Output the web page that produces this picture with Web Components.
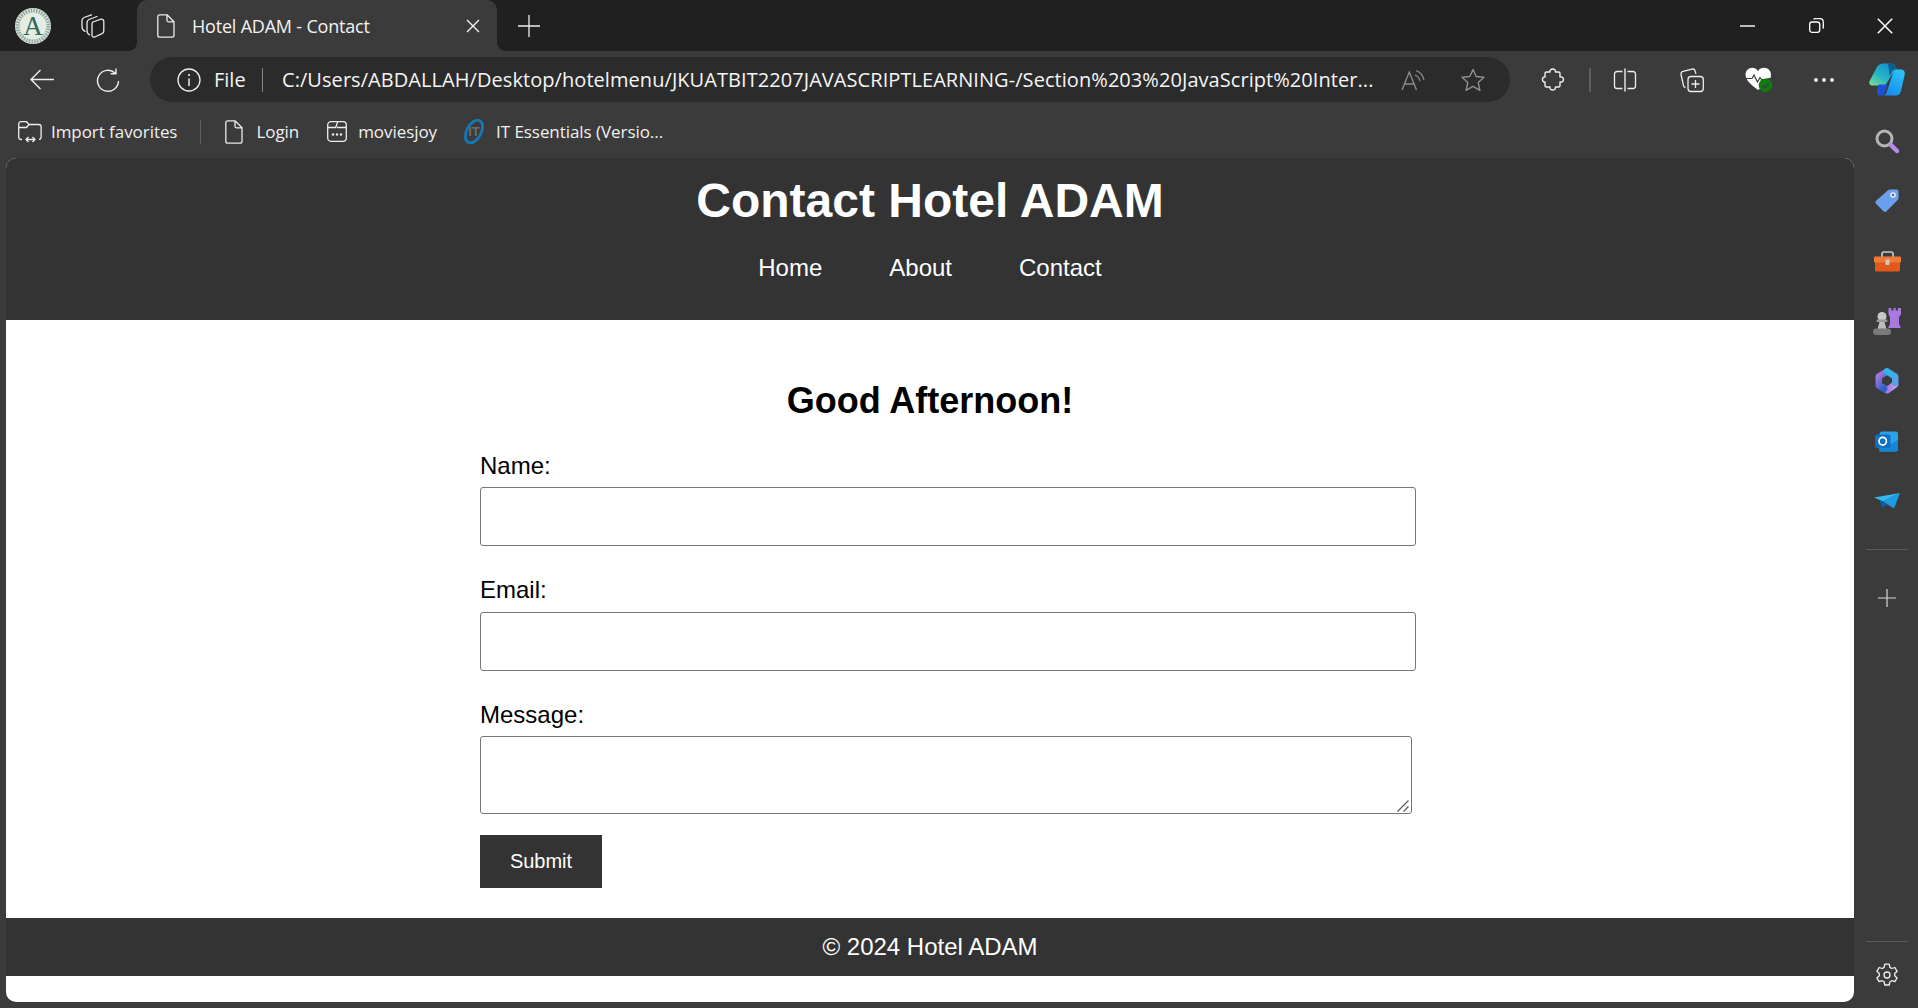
<!DOCTYPE html>
<html lang="en">
<head>
<meta charset="utf-8">
<title>Hotel ADAM - Contact</title>
<style>
    html, body { margin: 0; height: 100%; overflow: hidden; background: #3b3b3b; }
    body {
        display: grid;
        grid-template-rows: 51px 57px 1fr;
        grid-template-columns: 1fr;
        height: 1008px;
    }
</style>
</head>
<body>
<browser-tabstrip></browser-tabstrip>
<browser-toolbar></browser-toolbar>
<browser-body>
    <hotel-page>
        <hotel-header slot="header" heading="Contact Hotel ADAM"></hotel-header>
        <contact-form greeting="Good Afternoon!"></contact-form>
        <hotel-footer slot="footer">© 2024 Hotel ADAM</hotel-footer>
    </hotel-page>
</browser-body>

<script>
const ICONS = {
    workspaces: [24, 24, `<g fill="none" stroke="#e8e8e8" stroke-width="1.300" stroke-linecap="round" stroke-linejoin="round"><path d="M11.800 8L20 5.200Q22.800 4.800 22.800 7.800V17Q22.800 19 21 19.700L13.800 23Q11 23.600 11 21V10Q11 8.500 11.800 8z"/><path d="M8.500 20.800Q6 19.500 6 16.500V8.500Q6 6.500 8 5.500L16 2.500"/><path d="M4 17.300Q1 15.800 1 12.800V6.500Q1 4.500 3 3.500L10.500.8"/></g>`],
    file: [18, 24, `<path d="M2.800.8h7.200l7 7v13.400c0 1.100-.9 2-2 2H2.800c-1.100 0-2-.9-2-2V2.800c0-1.100.9-2 2-2zM10 .8v5.500c0 .9.600 1.500 1.500 1.500H17" fill="none" stroke="#eaeaea" stroke-width="1.300" stroke-linejoin="round"/>`],
    close: [14, 14, `<path d="M1 1l12 12M13 1L1 13" stroke="#f2f2f2" stroke-width="1.400" fill="none"/>`],
    plus: [22, 22, `<path d="M11 0v22M0 11h22" stroke="#ededed" stroke-width="1.300" fill="none"/>`],
    min: [15, 2, `<rect width="15" height="1.400" y=".3" fill="#fff"/>`],
    restore: [15, 15, `<g fill="none" stroke="#fff" stroke-width="1.300"><rect x=".7" y="4" width="10" height="10.300" rx="2.300"/><path d="M4.500 1.200c.4-.3.900-.5 1.500-.5h5c2 0 3.300 1.300 3.300 3.300v5c0 .6-.2 1.100-.5 1.500"/></g>`],
    winclose: [16, 16, `<path d="M.8.800l14.400 14.400M15.200.800L.8 15.200" stroke="#fff" stroke-width="1.500" fill="none"/>`],
    back: [24, 21, `<path d="M24 10.500H1.500M10.500 1L1 10.500 10.500 20" fill="none" stroke="#eee" stroke-width="1.400"/>`],
    refresh: [24, 24, `<path d="M19.300 5.200A10.500 10.500 0 1 0 22.500 13M20 .5v5.300h-5.300" fill="none" stroke="#eee" stroke-width="1.400"/>`],
    info: [24, 24, `<circle cx="12" cy="12" r="11" fill="none" stroke="#eee" stroke-width="1.300"/><path d="M12 10.500v7.500" stroke="#eee" stroke-width="1.500"/><circle cx="12" cy="7" r="1.100" fill="#eee"/>`],
    read: [24, 22, `<path d="M1 21L8.300 3l7.200 18M3.500 15h10" fill="none" stroke="#8a8a8a" stroke-width="1.400"/><path d="M15 1.500c4 1.500 7 5 8 9.500M14 6c2.500 1 4.300 3.200 5 6" fill="none" stroke="#8a8a8a" stroke-width="1.300"/>`],
    star: [24, 24, `<path d="M12 1.500l3.200 7 7.800.8-5.800 5.200 1.700 7.800-6.900-4-6.900 4 1.700-7.800L1 9.300l7.800-.8z" fill="none" stroke="#8f8f8f" stroke-width="1.400" stroke-linejoin="round"/>`],
    puzzle: [22, 23, `<path d="M8 4C7.600 2 9 1 10.700 1s3.100 1 2.700 3h3.100Q18 4 18 5.500V9c2-.4 3.500.7 3.500 2.500S20 14.400 18 14v3.500Q18 19 16.500 19h-3.100c.4 2-1 3-2.700 3S7.600 21 8 19H4.500Q3 19 3 17.500V14c-1.500.4-2.500-1-2.500-2.500S1.500 8.600 3 9V5.500Q3 4 4.500 4z" fill="none" stroke="#f0f0f0" stroke-width="1.400" stroke-linejoin="round"/>`],
    split: [22, 24, `<path d="M8.500 3.500H3a2.500 2.500 0 0 0-2.500 2.500v12A2.500 2.500 0 0 0 3 20.500h5.500M13.500 3.500H19A2.500 2.500 0 0 1 21.500 6v12a2.500 2.500 0 0 1-2.500 2.500h-5.500" fill="none" stroke="#eee" stroke-width="1.300"/><path d="M11 .5v23" stroke="#eee" stroke-width="1.400"/>`],
    collections: [24, 24, `<g fill="none" stroke="#eee" stroke-width="1.300"><rect x="8" y="8.500" width="15.300" height="15" rx="3"/><path d="M15.500 12v8M11.500 16h8"/><path d="M5.500 19.500c-1-.2-1.700-.9-2-1.800L1 6.500c-.3-1.400.5-2.800 2-3.100l9-2.300c1.300-.3 2.700.5 3.100 1.800l.8 3"/></g>`],
    health: [28, 25, `<path d="M13 4.200C11.500 1.800 9.500.8 7.300.8 3.500.8.500 3.800.500 7.600c0 5.500 5.500 10.500 12.500 15.400 1-.7 2-1.400 3-2.200A8.500 8.500 0 0 1 25.500 11c.3-1.100.5-2.300.5-3.400 0-3.800-3-6.800-6.800-6.800-2.700 0-4.900 1-6.200 3.400z" fill="#fff"/><path d="M.5 11.500h6.500l2-3.500 3.500 7 2.500-4.500 1.500 2h5" fill="none" stroke="#3b3b3b" stroke-width="1.200"/><circle cx="20.500" cy="18.300" r="6.800" fill="#107c10"/><path d="M17.500 18.500l2.200 2.200 4-4.200" fill="none" stroke="#3b3b3b" stroke-width="1.200"/>`],
    dots: [20, 4, `<circle cx="2" cy="2" r="1.900" fill="#f2f2f2"/><circle cx="10" cy="2" r="1.900" fill="#f2f2f2"/><circle cx="18" cy="2" r="1.900" fill="#f2f2f2"/>`],
    copilot: [36, 33, `<defs><linearGradient id="cpa" x1="0" y1="1" x2=".8" y2="0"><stop offset="0" stop-color="#7fe08c"/><stop offset=".45" stop-color="#27b7c4"/><stop offset="1" stop-color="#118ad0"/></linearGradient><linearGradient id="cpb" x1=".2" y1="1" x2=".8" y2="0"><stop offset="0" stop-color="#1689ee"/><stop offset="1" stop-color="#2cc3f5"/></linearGradient></defs><path d="M14 .5h8c3 0 4.500 2 6 6l-4 4L16 22.500H3.500c-2.500 0-3.800-2-3-4.300L8 4c.9-2.300 3.500-3.500 6-3.500z" fill="url(#cpa)"/><path d="M19 .5h3c3 0 4.500 2 6 6h-2c-2.500 0-3.500 2-4 4l-1 3z" fill="#0e5f8f"/><path d="M10 21.500h8.500l-3 9c-.3 1-1.500 2-3 2H9c-1.500-1.500-1.500-5.500 1-11z" fill="#1e4fd6"/><path d="M28 6.500h3.500c3 0 4.800 2 4.200 5l-3.700 16.500c-.6 3-2.600 4.500-5.300 4.500H13.500c2 0 3.400-1 4-3L24 10.500c.6-2.400 2-4 4-4z" fill="url(#cpb)"/>`],
    folder: [24, 22, `<g fill="none" stroke="#eee" stroke-width="1.300" stroke-linejoin="round"><path d="M4 18.500H3c-1.300 0-2.300-1-2.300-2.300V3c0-1.300 1-2.300 2.300-2.300h5.500L11 3.500h9.800c1.300 0 2.300 1 2.300 2.300v10.400c0 1.300-.8 2-2 2.300"/><path d="M.7 6.500H8.500L11 3.500"/><path d="M8 18.500h9M10.500 16l-2.500 2.500 2.500 2.500M14.500 16l2.500 2.500-2.500 2.500"/></g>`],
    site: [20, 21, `<g fill="none" stroke="#eee" stroke-width="1.300"><rect x=".7" y=".7" width="18.600" height="19.600" rx="3.300"/><path d="M.7 6.500h8l2-5.800M10 6.500h9.300"/></g><circle cx="6" cy="13.500" r="1.200" fill="#eee"/><circle cx="10" cy="13.500" r="1.200" fill="#eee"/><circle cx="14" cy="13.500" r="1.200" fill="#eee"/>`],
    itess: [22, 23, `<ellipse cx="11" cy="11.500" rx="7.200" ry="12.200" transform="rotate(28 11 11.500)" fill="none" stroke="#1377b8" stroke-width="2.800"/><text x="11" y="16" text-anchor="middle" font-family="Liberation Sans, sans-serif" font-size="13" font-weight="700" fill="#6b6b6b">IT</text>`],
    search: [24, 24, `<circle cx="9.500" cy="9.500" r="7.500" fill="none" stroke="#b5b5b5" stroke-width="3"/><path d="M16 16l6 6" stroke="#b98be6" stroke-width="4.500" stroke-linecap="round"/>`],
    tag: [24, 24, `<path d="M15 .5h6.500c1.100 0 2 .9 2 2V9c0 .8-.3 1.400-.8 2L11.500 22.300c-.9.900-2.200.9-3.100 0L1 14.800c-.8-.8-.8-2.100 0-3L13 1.300c.5-.5 1.200-.8 2-.8z" fill="#6aa0ee"/><circle cx="18" cy="6" r="2.800" fill="#e8eefc"/><circle cx="18" cy="6" r="1.200" fill="#3c5fa8"/>`],
    toolbox: [27, 21, `<path d="M8 7V3c0-1.200.8-2 2-2h7c1.200 0 2 .8 2 2v4" fill="none" stroke="#c9c9c9" stroke-width="1.700"/><rect x="1" y="6" width="25" height="14.500" rx="1.500" fill="#e2581d"/><rect y="5.500" width="27" height="6" rx="1" fill="#f07a35"/><rect x="11.500" y="8.500" width="4" height="5.500" rx=".8" fill="#c9c9c9"/>`],
    chess: [28, 27, `<path d="M15.500 0h2.800v2.500h2.200V0h2.200v2.500h2.200V0H28v6.500l-2 2.500v7l2 4H15l2-4V9l-1.500-2.500z" fill="#a979e0"/><circle cx="9" cy="8.500" r="4.500" fill="#c8c8c8"/><rect x="3.500" y="11.500" width="11" height="2.500" rx="1.200" fill="#9c9c9c"/><path d="M6.500 14h5l2 7h-9z" fill="#bdbdbd"/><rect y="20.500" width="18" height="6.500" rx="3" fill="#7a7a7a"/>`],
    m365: [24, 26, `<defs><linearGradient id="m3a" x1="0" y1="0" x2=".6" y2="1"><stop offset="0" stop-color="#b07ae6"/><stop offset="1" stop-color="#2d5fc9"/></linearGradient><linearGradient id="m3b" x1="0" y1="0" x2="1" y2="1"><stop offset="0" stop-color="#29b6e8"/><stop offset="1" stop-color="#5aa0ee"/></linearGradient><linearGradient id="m3c" x1="0" y1="0" x2="1" y2="0"><stop offset="0" stop-color="#8a5fd8"/><stop offset="1" stop-color="#c49af0"/></linearGradient></defs><g fill="none" stroke-width="6.500" stroke-linejoin="round" stroke-linecap="round"><path d="M20 16.500L12 22.300 7 19" stroke="url(#m3c)"/><path d="M12 3.500L3.800 8.500V17.500L9 20.800" stroke="url(#m3a)"/><path d="M12 3.500L20.200 8.500V15" stroke="url(#m3b)"/></g>`],
    outlook: [24, 21, `<path d="M7 .5h14c1 0 2 1 2 2v15.500c0 1.500-1 2.500-2.500 2.500H6c-.9 0-1.500-.5-1.500-1.500V3C4.500 1.500 5.500.5 7 .5z" fill="#2aa4e8"/><path d="M23 9l-9 5-9.500-5v11.500h16c1.500 0 2.500-1 2.500-2.500z" fill="#1486d6"/><rect y="3.500" width="15.500" height="13.500" rx="2" fill="#0c6fc4"/><ellipse cx="7.700" cy="10.200" rx="3.700" ry="3.900" fill="none" stroke="#fff" stroke-width="1.700"/>`],
    send: [26, 16, `<path d="M0 4.500L26 0 9 8.500z" fill="#35b8f0"/><path d="M26 0L9 8.500 20 15.500z" fill="#1e9be6"/><path d="M5.500 7l3.500 1.500 4 3-4.500 3.500z" fill="#0d5ea8"/>`],
    railplus: [18, 18, `<path d="M9 0v18M0 9h18" stroke="#d8d8d8" stroke-width="1.200" fill="none"/>`],
    gear: [24, 24, `<path d="M9.800 1.200h4.400l.7 3.200 1.900 1.100 3.100-1 2.200 3.800-2.400 2.200v2.200l2.400 2.200-2.200 3.800-3.100-1-1.900 1.100-.7 3.200H9.800l-.7-3.200-1.900-1.100-3.100 1-2.200-3.800 2.400-2.200v-2.200L1.900 8.300l2.200-3.800 3.100 1 1.900-1.100z" fill="none" stroke="#efefef" stroke-width="1.300" stroke-linejoin="round"/><circle cx="12" cy="12" r="3" fill="none" stroke="#efefef" stroke-width="1.300"/>`],
};

class UiIcon extends HTMLElement {
    connectedCallback() {
        const [w, h, body] = ICONS[this.getAttribute("name")];
        this.attachShadow({ mode: "open" });
        this.shadowRoot.innerHTML = `
            <style>
                :host { display: inline-flex; flex: none; align-items: center; justify-content: center; }
                svg { display: block; overflow: visible; }
            </style>
            <svg width="${w}" height="${h}" viewBox="0 0 ${w} ${h}">${body}</svg>
        `;
    }
}

// fixed width cell with a centred icon
class IconSlot extends HTMLElement {
    connectedCallback() {
        const w = this.getAttribute("w") || 60;
        this.attachShadow({ mode: "open" });
        this.shadowRoot.innerHTML = `
            <style>
                :host { display: flex; flex: none; width: ${w}px; align-items: center; justify-content: center; }
            </style>
            <ui-icon name="${this.getAttribute("name")}"></ui-icon>
        `;
    }
}

class BrowserTabstrip extends HTMLElement {
    constructor() {
        super();
        this.attachShadow({ mode: "open" });
        this.shadowRoot.innerHTML = `
            <style>
                :host {
                    display: flex;
                    align-items: center;
                    height: 51px;
                    background: #202020;
                    color: #f2f2f2;
                    font: 18px "Open Sans", sans-serif;
                }
                .avatar { margin-left: 15px; width: 36px; height: 36px; flex: none; display: block; }
                .spaces { margin-left: 30px; }
                .tab {
                    position: relative;
                    box-sizing: border-box;
                    margin-left: 32px;
                    width: 360px;
                    height: 51px;
                    display: flex;
                    align-items: center;
                    background: #3b3b3b;
                    border-radius: 10px 10px 0 0;
                    padding-left: 20px;
                }
                .tab::before, .tab::after {
                    content: "";
                    position: absolute;
                    bottom: 0;
                    width: 8px;
                    height: 8px;
                }
                .tab::before { left: -8px; background: radial-gradient(circle at 0 0, #202020 7.5px, #3b3b3b 8px); }
                .tab::after { right: -8px; background: radial-gradient(circle at 100% 0, #202020 7.5px, #3b3b3b 8px); }
                .title { margin-left: 17px; flex: 1; letter-spacing: -0.2px; white-space: nowrap; }
                .x { margin-right: 17px; }
                .new { margin-left: 21px; }
                .win { margin-left: auto; display: flex; align-items: center; }
            </style>
            <svg class="avatar" viewBox="0 0 36 36">
                <circle cx="18" cy="18" r="18" fill="#dfe6dc"/>
                <circle cx="18" cy="18" r="15.500" fill="none" stroke="#8fa89f" stroke-width="4" stroke-dasharray="1.500 1.200"/>
                <circle cx="18" cy="18" r="12.800" fill="#e6ebe3"/>
                <text x="18" y="27" text-anchor="middle" font-family="Liberation Serif, serif" font-size="27" fill="#2f6b5c">A</text>
            </svg>
            <ui-icon class="spaces" name="workspaces"></ui-icon>
            <div class="tab">
                <ui-icon name="file"></ui-icon>
                <span class="title">Hotel ADAM - Contact</span>
                <ui-icon class="x" name="close"></ui-icon>
            </div>
            <ui-icon class="new" name="plus"></ui-icon>
            <div class="win">
                <icon-slot w="67" name="min"></icon-slot>
                <icon-slot w="71" name="restore"></icon-slot>
                <icon-slot w="66" name="winclose"></icon-slot>
            </div>
        `;
    }
}

class BrowserToolbar extends HTMLElement {
    constructor() {
        super();
        this.attachShadow({ mode: "open" });
        this.shadowRoot.innerHTML = `
            <style>
                :host {
                    display: flex;
                    align-items: flex-start;
                    height: 57px;
                    background: #3b3b3b;
                    color: #f5f5f5;
                    font: 20px "Open Sans", sans-serif;
                }
                .row { display: flex; height: 45px; margin-top: 6px; width: 100%; }
                .nav { margin-left: 9px; display: flex; }
                .address {
                    margin-left: 9px;
                    width: 1360px;
                    height: 45px;
                    flex: none;
                    background: #2b2b2b;
                    border-radius: 22.500px;
                    display: flex;
                    align-items: center;
                    box-sizing: border-box;
                    padding-left: 27px;
                    padding-right: 7px;
                }
                .scheme { margin-left: 13px; }
                .bar { width: 1px; height: 24px; background: #8a8a8a; margin: 0 19px 0 auto; flex: none; }
                .lead { display: flex; align-items: center; width: 105px; flex: none; }
                .url { flex: 1; white-space: nowrap; overflow: hidden; letter-spacing: 0.06px; }
                .rule { width: 2px; height: 24px; align-self: center; background: #5f5f5f; margin-left: 6px; flex: none; }
                .tools { margin-left: 13px; display: flex; }
                .tools icon-slot:nth-of-type(2) { margin-left: 1px; }
            </style>
            <div class="row">
                <div class="nav">
                    <icon-slot w="66" name="back"></icon-slot>
                    <icon-slot w="66" name="refresh"></icon-slot>
                </div>
                <div class="address">
                    <div class="lead">
                        <ui-icon name="info"></ui-icon>
                        <span class="scheme">File</span>
                        <span class="bar"></span>
                    </div>
                    <span class="url">C:/Users/ABDALLAH/Desktop/hotelmenu/JKUATBIT2207JAVASCRIPTLEARNING-/Section%203%20JavaScript%20Inter...</span>
                    <icon-slot w="60" name="read"></icon-slot>
                    <icon-slot w="60" name="star"></icon-slot>
                </div>
                <div class="tools">
                    <icon-slot w="60" name="puzzle"></icon-slot>
                    <span class="rule"></span>
                    <icon-slot w="66" name="split"></icon-slot>
                    <icon-slot w="68" name="collections"></icon-slot>
                    <icon-slot w="66" name="health"></icon-slot>
                    <icon-slot w="64" name="dots"></icon-slot>
                    <icon-slot w="62" name="copilot"></icon-slot>
                </div>
            </div>
        `;
    }
}

class BookmarksBar extends HTMLElement {
    constructor() {
        super();
        this.attachShadow({ mode: "open" });
        this.shadowRoot.innerHTML = `
            <style>
                :host {
                    display: flex;
                    align-items: center;
                    box-sizing: border-box;
                    height: 50px;
                    padding-bottom: 3px;
                    color: #f0f0f0;
                    font: 17px "Open Sans", sans-serif;
                    letter-spacing: -0.06px;
                    white-space: nowrap;
                }
                .mark { display: flex; align-items: center; gap: 11px; }
                .sep { width: 1px; height: 24px; background: #5f5f5f; margin: 0 24px 0 23px; flex: none; }
            </style>
            <div class="mark" style="margin-left:18px;gap:9px"><ui-icon name="folder"></ui-icon><span>Import favorites</span></div>
            <span class="sep"></span>
            <div class="mark" style="gap:13px"><ui-icon name="file"></ui-icon><span>Login</span></div>
            <div class="mark" style="margin-left:28px"><ui-icon name="site"></ui-icon><span>moviesjoy</span></div>
            <div class="mark" style="margin-left:26px"><ui-icon name="itess"></ui-icon><span>IT Essentials (Versio...</span></div>
        `;
    }
}

class SideRail extends HTMLElement {
    constructor() {
        super();
        this.attachShadow({ mode: "open" });
        this.shadowRoot.innerHTML = `
            <style>
                :host {
                    display: flex;
                    flex-direction: column;
                    align-items: center;
                    width: 64px;
                    flex: none;
                    box-sizing: border-box;
                    padding: 3px 0 0 2px;
                    height: 900px;
                }
                .item { height: 60px; display: flex; align-items: center; justify-content: center; flex: none; }
                .line { width: 42px; height: 1px; background: #5a5a5a; flex: none; }
                .add { margin-top: 18px; }
                .foot { margin-top: auto; margin-bottom: 3px; }
                .foot .line { margin-bottom: 3px; }
            </style>
            <div class="item"><ui-icon name="search"></ui-icon></div>
            <div class="item"><ui-icon name="tag"></ui-icon></div>
            <div class="item"><ui-icon name="toolbox"></ui-icon></div>
            <div class="item"><ui-icon name="chess"></ui-icon></div>
            <div class="item"><ui-icon name="m365"></ui-icon></div>
            <div class="item"><ui-icon name="outlook"></ui-icon></div>
            <div class="item"><ui-icon name="send"></ui-icon></div>
            <div class="line" style="margin-top:18px"></div>
            <div class="item add"><ui-icon name="railplus"></ui-icon></div>
            <div class="foot">
                <div class="line"></div>
                <div class="item"><ui-icon name="gear"></ui-icon></div>
            </div>
        `;
    }
}

class BrowserBody extends HTMLElement {
    constructor() {
        super();
        this.attachShadow({ mode: "open" });
        this.shadowRoot.innerHTML = `
            <style>
                :host { display: flex; height: 900px; }
                .left { flex: 1; min-width: 0; display: flex; flex-direction: column; }
                .view { padding-left: 6px; }
            </style>
            <div class="left">
                <bookmarks-bar></bookmarks-bar>
                <div class="view"><slot></slot></div>
            </div>
            <side-rail></side-rail>
        `;
    }
}

class HotelPage extends HTMLElement {
    constructor() {
        super();
        this.attachShadow({ mode: "open" });
        this.shadowRoot.innerHTML = `
            <style>
                :host {
                    display: flex;
                    flex-direction: column;
                    height: 844px;
                    background: #fff;
                    border-radius: 10px;
                    overflow: hidden;
                    color: #000;
                    font: 24px "Liberation Sans", Arial, sans-serif;
                }
            </style>
            <slot name="header"></slot>
            <slot></slot>
            <slot name="footer"></slot>
        `;
    }
}

class HotelHeader extends HTMLElement {
    connectedCallback() {
        this.attachShadow({ mode: "open" });
        this.shadowRoot.innerHTML = `
            <style>
                :host {
                    display: block;
                    background: #333;
                    color: #fff;
                    box-sizing: border-box;
                    height: 162px;
                    padding-top: 15px;
                    text-align: center;
                }
                h1 { margin: 0 0 26px; font-size: 48px; line-height: 55px; }
                nav { display: flex; justify-content: center; gap: 67px; line-height: 28px; }
                a { color: #fff; text-decoration: none; }
            </style>
            <h1>${this.getAttribute("heading")}</h1>
            <nav>
                <a href="#home">Home</a>
                <a href="#about">About</a>
                <a href="#contact">Contact</a>
            </nav>
        `;
    }
}

class ContactForm extends HTMLElement {
    connectedCallback() {
        this.attachShadow({ mode: "open" });
        this.shadowRoot.innerHTML = `
            <style>
                :host { display: block; box-sizing: border-box; height: 598px; padding-top: 60px; }
                h2 { margin: 0 0 31px; font-size: 36px; line-height: 41px; text-align: center; }
                form { width: 900px; margin: 0 auto; }
                label { display: block; line-height: 28px; margin-bottom: 7px; }
                label.wide { margin-bottom: 8px; }
                input, textarea {
                    display: block;
                    box-sizing: border-box;
                    border: 1px solid #767676;
                    border-radius: 3px;
                    background: #fff;
                    padding: 15px;
                    font: inherit;
                    margin: 0;
                }
                input { width: 936px; height: 59px; margin-bottom: 30px; }
                textarea { width: 932px; height: 78px; resize: none; }
                .area { position: relative; width: 932px; height: 78px; margin-bottom: 21px; }
                .grip { position: absolute; right: 3px; bottom: 2px; width: 12px; height: 12px; }
                button {
                    display: block;
                    width: 122px;
                    height: 53px;
                    border: 0;
                    padding: 0;
                    background: #333;
                    color: #fff;
                    font: 20px "Liberation Sans", Arial, sans-serif;
                }
            </style>
            <h2>${this.getAttribute("greeting")}</h2>
            <form>
                <label for="name">Name:</label>
                <input type="text" id="name">
                <label class="wide" for="email">Email:</label>
                <input type="email" id="email">
                <label for="message">Message:</label>
                <div class="area">
                    <textarea id="message"></textarea>
                    <svg class="grip" viewBox="0 0 12 12"><path d="M.5 11.500L11.500.5M6.500 11.500l5-5" stroke="#5a5a5a" stroke-width="1.200" fill="none"/></svg>
                </div>
                <button type="button">Submit</button>
            </form>
        `;
    }
}

class HotelFooter extends HTMLElement {
    constructor() {
        super();
        this.attachShadow({ mode: "open" });
        this.shadowRoot.innerHTML = `
            <style>
                :host {
                    display: block;
                    background: #333;
                    color: #fff;
                    text-align: center;
                    padding: 15px 0;
                    line-height: 28px;
                }
            </style>
            <slot></slot>
        `;
    }
}

customElements.define("ui-icon", UiIcon);
customElements.define("icon-slot", IconSlot);
customElements.define("browser-tabstrip", BrowserTabstrip);
customElements.define("browser-toolbar", BrowserToolbar);
customElements.define("bookmarks-bar", BookmarksBar);
customElements.define("side-rail", SideRail);
customElements.define("browser-body", BrowserBody);
customElements.define("hotel-page", HotelPage);
customElements.define("hotel-header", HotelHeader);
customElements.define("contact-form", ContactForm);
customElements.define("hotel-footer", HotelFooter);
</script>
</body>
</html>
